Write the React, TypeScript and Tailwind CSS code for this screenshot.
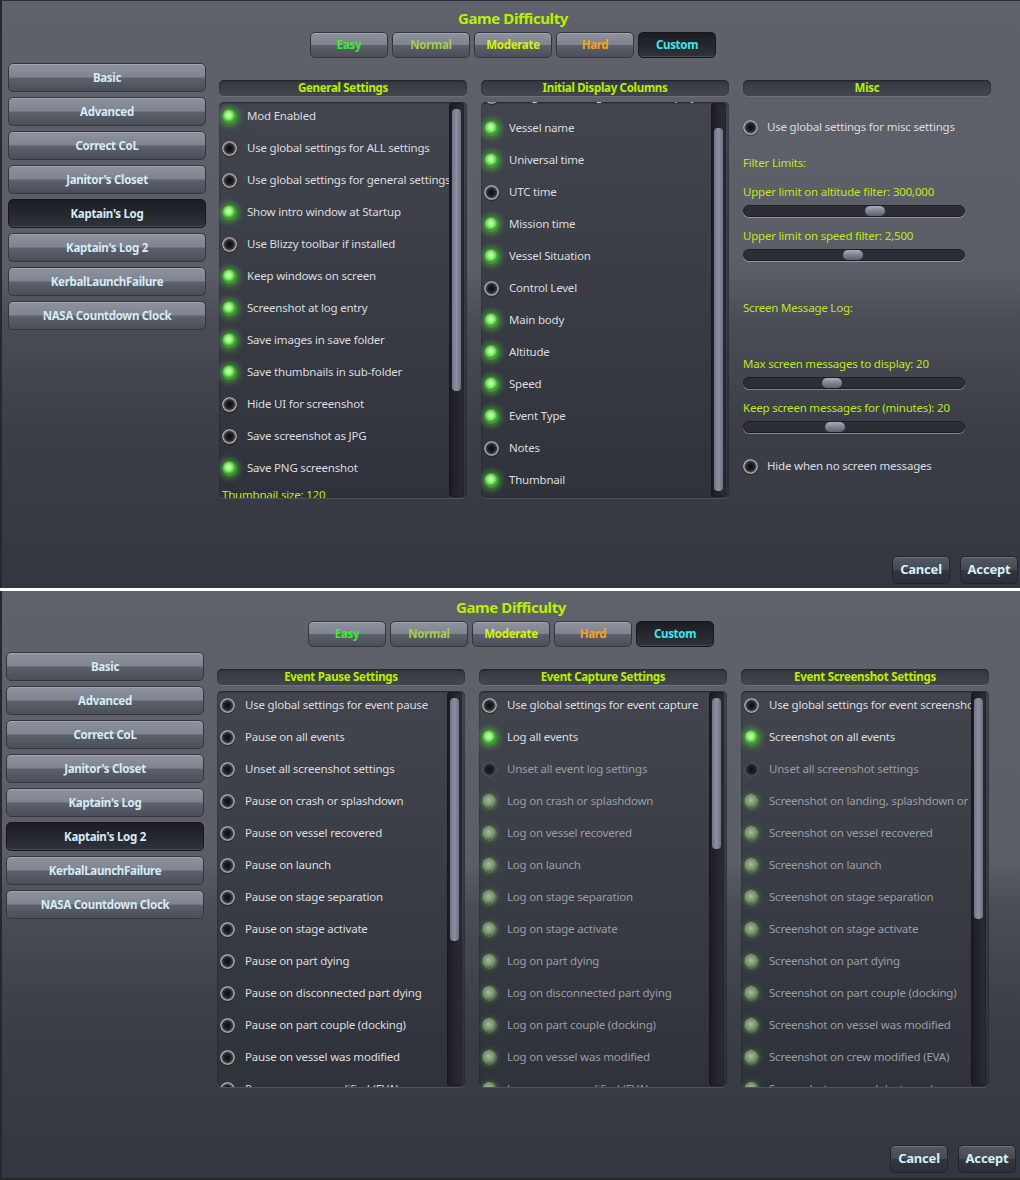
import React from "react";

type Item = { label: string; on?: boolean; dim?: boolean };

const btnLight =
	"bg-[linear-gradient(to_bottom,#8e929e_0%,#80848f_48%,#5d616c_52%,#4a4e59_100%)] border border-[#33363c] shadow-[inset_0_1px_0_rgba(255,255,255,0.18)]";
const btnDark =
	"bg-[linear-gradient(to_bottom,#1b1d22_0%,#24272d_50%,#30333a_100%)] border border-[#15171b] shadow-[inset_0_-1px_0_rgba(255,255,255,0.12)]";

const itemText = "text-[11.5px] tracking-[-0.2px]";
const boldText = "text-[11.5px] font-bold tracking-[-0.3px]";

const Toggle = ({ on, dim, className = "" }: { on?: boolean; dim?: boolean; className?: string }) => {
	let look =
		"bg-[radial-gradient(circle_closest-side,#0c0c0d_0%,#1f1f21_45%,#38383a_65%,#7c7c7c_80%,#bdbdbd_90%,#6e6e6e_100%)] shadow-[0_1px_1px_rgba(0,0,0,0.4)]";
	if (on && !dim)
		look =
			"bg-[radial-gradient(circle_closest-side_at_45%_42%,#eaffdc_0%,#a4f78a_40%,#5fd448_80%,#3f9e30_100%)] shadow-[0_0_6px_2px_rgba(90,235,60,0.5)]";
	if (on && dim)
		look =
			"bg-[radial-gradient(circle_closest-side_at_45%_42%,#a3bd98_0%,#86a27c_55%,#6f8c65_82%,#8aa382_92%,#56704e_100%)] shadow-[0_0_5px_1px_rgba(90,190,60,0.35)]";
	if (!on && dim)
		look =
			"bg-[radial-gradient(circle_closest-side,#101012_0%,#1f1f22_50%,#2f3033_70%,#4a4b4e_85%,#56575a_92%,#3c3d40_100%)]";
	return <div className={`h-[15px] w-[15px] shrink-0 rounded-full ${look} ${className}`} />;
};

const Row = ({ label, on, dim }: Item) => (
	<div className="flex h-[32px] items-center whitespace-nowrap">
		<Toggle on={on} dim={dim} className="ml-[3px]" />
		<span className={`ml-[10px] ${itemText} ${dim ? "text-[#9b9da2]" : "text-[#dcdddf]"}`}>{label}</span>
	</div>
);

const Header = ({ title }: { title: string }) => (
	<div className="flex h-[16px] items-center justify-center rounded-[5px] bg-[linear-gradient(to_bottom,#35383f_0%,#43464e_100%)] shadow-[inset_0_1px_2px_rgba(0,0,0,0.45),0_1px_0_rgba(255,255,255,0.1)]">
		<span className={`${boldText} leading-none text-[#b9f000]`}>{title}</span>
	</div>
);

const Scrollbar = ({ top, height }: { top: number; height: number }) => (
	<div className="my-[1px] mr-[3px] w-[15px] shrink-0 rounded-[4px] bg-[linear-gradient(to_right,#1a1c21_0%,#2b2e35_100%)] px-[3px] shadow-[inset_0_0_2px_rgba(0,0,0,0.7)]">
		<div
			className="rounded-[4px] bg-[linear-gradient(to_right,#6f7584_0%,#8a90a0_50%,#6c7281_100%)]"
			style={{ marginTop: top, height }}
		/>
	</div>
);

const ListBox = ({
	title,
	items,
	scroll = 0,
	thumb,
	footer,
}: {
	title: string;
	items: Item[];
	scroll?: number;
	thumb: [number, number];
	footer?: string;
}) => (
	<div className="flex w-[248px] flex-col">
		<Header title={title} />
		<div className="mt-[6px] flex h-[396px] overflow-hidden rounded-[5px] bg-[linear-gradient(to_bottom,#42454e_0%,#393c45_50%,#2f323a_100%)] shadow-[inset_0_1px_2px_rgba(0,0,0,0.5),0_1px_0_rgba(255,255,255,0.12)]">
			<div className="min-w-0 flex-1 overflow-hidden">
				<div style={{ marginTop: -2 - scroll }}>
					{items.map((it) => (
						<Row key={it.label} {...it} />
					))}
					{footer && (
						<div className={`ml-[3px] mt-[3px] ${itemText} leading-[16px] text-[#b9f000]`}>{footer}</div>
					)}
				</div>
			</div>
			<Scrollbar top={thumb[0]} height={thumb[1]} />
		</div>
	</div>
);

const Label = ({ text, className = "" }: { text: string; className?: string }) => (
	<div className={`h-[16px] ${itemText} leading-[16px] text-[#bde81e] whitespace-nowrap ${className}`}>{text}</div>
);

const Slider = ({ value, className = "" }: { value: number; className?: string }) => (
	<div
		className={`relative h-[12px] w-[222px] rounded-full border border-[#1d1e23] bg-[#2d2e35] shadow-[0_1px_0_rgba(255,255,255,0.35)] ${className}`}
	>
		<div
			className="absolute top-[0px] h-[10px] w-[20px] rounded-[5px] bg-[linear-gradient(to_bottom,#a7adba_0%,#7d8391_50%,#5b616e_100%)]"
			style={{ left: value - 10 }}
		/>
	</div>
);

const Misc = () => (
	<div className="flex w-[248px] flex-col">
		<Header title="Misc" />
		<div className="mt-[15px] flex h-[32px] items-center whitespace-nowrap">
			<Toggle />
			<span className={`ml-[9px] ${itemText} text-[#dcdddf]`}>Use global settings for misc settings</span>
		</div>
		<Label text="Filter Limits:" className="mt-[12px]" />
		<Label text="Upper limit on altitude filter: 300,000" className="mt-[13px]" />
		<Slider value={131} className="mt-[5px]" />
		<Label text="Upper limit on speed filter: 2,500" className="mt-[11px]" />
		<Slider value={109} className="mt-[5px]" />
		<Label text="Screen Message Log:" className="mt-[39px]" />
		<Label text="Max screen messages to display: 20" className="mt-[40px]" />
		<Slider value={88} className="mt-[5px]" />
		<Label text="Keep screen messages for (minutes): 20" className="mt-[11px]" />
		<Slider value={91} className="mt-[5px]" />
		<div className="mt-[17px] flex h-[32px] items-center whitespace-nowrap">
			<Toggle />
			<span className={`ml-[9px] ${itemText} text-[#dcdddf]`}>Hide when no screen messages</span>
		</div>
	</div>
);

const difficulties = [
	{ name: "Easy", color: "text-[#39ee2e]" },
	{ name: "Normal", color: "text-[#a6cc4c]" },
	{ name: "Moderate", color: "text-[#d6f200]" },
	{ name: "Hard", color: "text-[#f4a21a]" },
	{ name: "Custom", color: "text-[#3fe6ef]" },
];

const navItems = [
	"Basic",
	"Advanced",
	"Correct CoL",
	"Janitor's Closet",
	"Kaptain's Log",
	"Kaptain's Log 2",
	"KerbalLaunchFailure",
	"NASA Countdown Clock",
];

const Dialog = ({
	selected,
	shift,
	children,
	className = "",
}: {
	selected: string;
	shift?: boolean;
	children: React.ReactNode;
	className?: string;
}) => (
	<div
		className={`overflow-hidden border-l-2 border-[#26282d] bg-[linear-gradient(to_bottom,#5f626a_0%,#5b5e67_46%,#4a4d56_54%,#3c3f48_72%,#33363f_100%)] ${className}`}
	>
		<div className={`flex h-full w-[1026px] flex-col ${shift ? "-ml-[4px] pb-[5px]" : "-ml-[2px] pt-[1px] pb-[4px]"}`}>
			<div className="pt-[7px] text-center text-[15px] font-bold leading-[18px] tracking-[-0.4px] text-[#b9f000]">
				Game Difficulty
			</div>
			<div className="mt-[5px] flex justify-center gap-[4px]">
				{difficulties.map((d) => (
					<div
						key={d.name}
						className={`flex h-[26px] w-[78px] items-center justify-center rounded-[5px] ${boldText} ${d.color} ${
							d.name === "Custom" ? btnDark : btnLight
						}`}
					>
						{d.name}
					</div>
				))}
			</div>
			<div className="mt-[5px] flex pl-[8px]">
				<div className="flex w-[198px] flex-col gap-[5px]">
					{navItems.map((n) => (
						<div
							key={n}
							className={`flex h-[29px] items-center justify-center rounded-[5px] ${boldText} text-[#d5ecf7] ${
								n === selected ? btnDark : btnLight
							}`}
						>
							{n}
						</div>
					))}
				</div>
				<div className="ml-[13px] flex gap-[14px] pt-[17px]">{children}</div>
			</div>
			<div className="mt-auto flex justify-end gap-[10px] pr-[8px]">
				{["Cancel", "Accept"].map((b) => (
					<div
						key={b}
						className="flex h-[28px] w-[58px] items-center justify-center rounded-[5px] border border-[#23252a] bg-[linear-gradient(to_bottom,#545862_0%,#454952_50%,#33363e_52%,#2c2f36_100%)] text-[13px] font-bold tracking-[-0.2px] text-[#d5f0fb] shadow-[inset_0_1px_0_rgba(255,255,255,0.15)]"
					>
						{b}
					</div>
				))}
			</div>
		</div>
	</div>
);

const general: Item[] = [
	{ label: "Mod Enabled", on: true },
	{ label: "Use global settings for ALL settings" },
	{ label: "Use global settings for general settings" },
	{ label: "Show intro window at Startup", on: true },
	{ label: "Use Blizzy toolbar if installed" },
	{ label: "Keep windows on screen", on: true },
	{ label: "Screenshot at log entry", on: true },
	{ label: "Save images in save folder", on: true },
	{ label: "Save thumbnails in sub-folder", on: true },
	{ label: "Hide UI for screenshot" },
	{ label: "Save screenshot as JPG" },
	{ label: "Save PNG screenshot", on: true },
];

const columns: Item[] = [
	{ label: "Use global settings for initial display columns" },
	{ label: "Vessel name", on: true },
	{ label: "Universal time", on: true },
	{ label: "UTC time" },
	{ label: "Mission time", on: true },
	{ label: "Vessel Situation", on: true },
	{ label: "Control Level" },
	{ label: "Main body", on: true },
	{ label: "Altitude", on: true },
	{ label: "Speed", on: true },
	{ label: "Event Type", on: true },
	{ label: "Notes" },
	{ label: "Thumbnail", on: true },
];

const events = [
	"on crash or splashdown",
	"on vessel recovered",
	"on launch",
	"on stage separation",
	"on stage activate",
	"on part dying",
	"on disconnected part dying",
	"on part couple (docking)",
	"on vessel was modified",
	"on crew modified (EVA)",
];

const pause: Item[] = [
	{ label: "Use global settings for event pause" },
	{ label: "Pause on all events" },
	{ label: "Unset all screenshot settings" },
	...events.map((e) => ({ label: `Pause ${e}` })),
];

const capture: Item[] = [
	{ label: "Use global settings for event capture" },
	{ label: "Log all events", on: true },
	{ label: "Unset all event log settings", dim: true },
	...events.map((e) => ({ label: `Log ${e}`, on: true, dim: true })),
];

const shots: Item[] = [
	{ label: "Use global settings for event screenshot" },
	{ label: "Screenshot on all events", on: true },
	{ label: "Unset all screenshot settings", dim: true },
	...[
		"on landing, splashdown or crash",
		"on vessel recovered",
		"on launch",
		"on stage separation",
		"on stage activate",
		"on part dying",
		"on part couple (docking)",
		"on vessel was modified",
		"on crew modified (EVA)",
		"on vessel destroyed",
	].map((e) => ({ label: `Screenshot ${e}`, on: true, dim: true })),
];

export default function App() {
	return (
		<div className="flex h-[1180px] w-[1020px] flex-col bg-white font-['Noto_Sans',sans-serif]">
			<Dialog selected="Kaptain's Log" className="h-[588px] border-t border-t-[#2a2c31]">
				<ListBox title="General Settings" items={general} thumb={[6, 282]} footer="Thumbnail size: 120" />
				<ListBox title="Initial Display Columns" items={columns} scroll={20} thumb={[25, 363]} />
				<Misc />
			</Dialog>
			<Dialog selected="Kaptain's Log 2" shift className="mt-[3px] h-[587px]">
				<ListBox title="Event Pause Settings" items={pause} thumb={[6, 243]} />
				<ListBox title="Event Capture Settings" items={capture} thumb={[6, 151]} />
				<ListBox title="Event Screenshot Settings" items={shots} thumb={[6, 221]} />
			</Dialog>
			<div className="h-[2px] bg-[#2b2822]" />
		</div>
	);
}
